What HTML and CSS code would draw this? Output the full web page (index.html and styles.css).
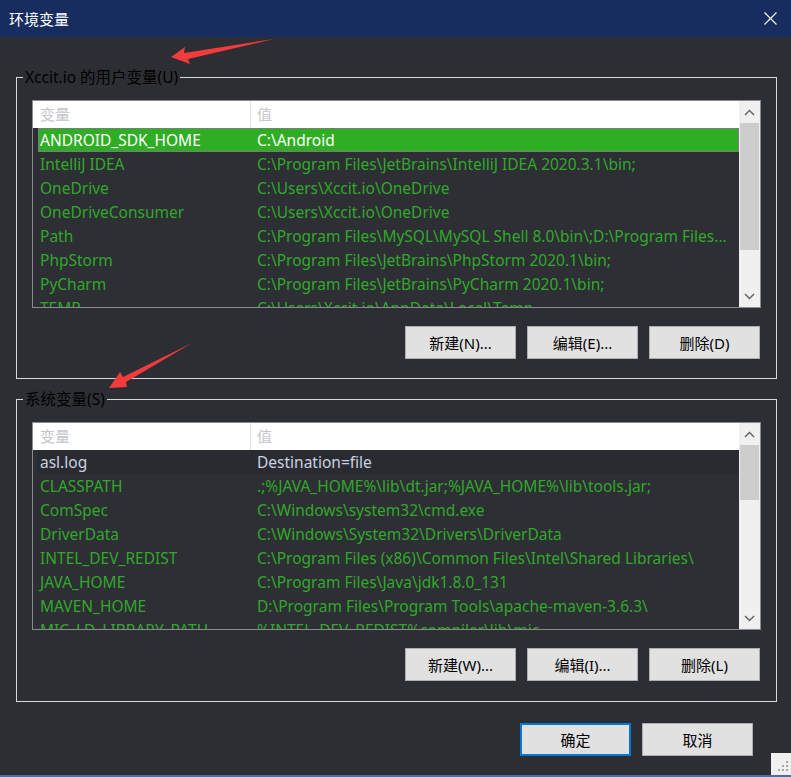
FILE: index.html
```html
<!DOCTYPE html>
<html lang="zh-CN">
<head>
<meta charset="utf-8">
<title>环境变量</title>
<link rel="stylesheet" href="styles.css">
</head>
<body>
<div class="window">
  <div class="titlebar">
    <span class="title">环境变量</span>
    <svg class="close" width="13" height="13" viewBox="0 0 13 13"><path d="M0.5 0.5 L12.5 12.5 M12.5 0.5 L0.5 12.5" stroke="#fff" stroke-width="1.1" fill="none"/></svg>
  </div>
  <div class="body">
    <fieldset class="group g1">
      <legend>Xccit.io 的用户变量(U)</legend>
      <div class="list">
        <div class="list-main">
          <div class="head"><div class="c1">变量</div><div class="c2">值</div></div>
          <div class="rows">
            <div class="row sel"><div class="c1">ANDROID_SDK_HOME</div><div class="c2">C:\Android</div></div>
            <div class="row"><div class="c1">IntelliJ IDEA</div><div class="c2">C:\Program Files\JetBrains\IntelliJ IDEA 2020.3.1\bin;</div></div>
            <div class="row"><div class="c1">OneDrive</div><div class="c2">C:\Users\Xccit.io\OneDrive</div></div>
            <div class="row"><div class="c1">OneDriveConsumer</div><div class="c2">C:\Users\Xccit.io\OneDrive</div></div>
            <div class="row"><div class="c1">Path</div><div class="c2">C:\Program Files\MySQL\MySQL Shell 8.0\bin\;D:\Program Files...</div></div>
            <div class="row"><div class="c1">PhpStorm</div><div class="c2">C:\Program Files\JetBrains\PhpStorm 2020.1\bin;</div></div>
            <div class="row"><div class="c1">PyCharm</div><div class="c2">C:\Program Files\JetBrains\PyCharm 2020.1\bin;</div></div>
            <div class="row"><div class="c1">TEMP</div><div class="c2">C:\Users\Xccit.io\AppData\Local\Temp</div></div>
          </div>
        </div>
        <div class="scroll">
          <div class="sbtn"><svg width="11" height="7" viewBox="0 0 11 7"><path d="M1 6 L5.5 1.5 L10 6" stroke="#606060" stroke-width="1.4" fill="none"/></svg></div>
          <div class="track"><div class="thumb t1"></div></div>
          <div class="sbtn"><svg width="11" height="7" viewBox="0 0 11 7"><path d="M1 1 L5.5 5.5 L10 1" stroke="#606060" stroke-width="1.4" fill="none"/></svg></div>
        </div>
      </div>
      <div class="btns">
        <button class="btn">新建(N)...</button>
        <button class="btn">编辑(E)...</button>
        <button class="btn">删除(D)</button>
      </div>
    </fieldset>

    <fieldset class="group g2">
      <legend>系统变量(S)</legend>
      <div class="list">
        <div class="list-main">
          <div class="head"><div class="c1">变量</div><div class="c2">值</div></div>
          <div class="rows">
            <div class="row cur"><div class="c1">asl.log</div><div class="c2">Destination=file</div></div>
            <div class="row"><div class="c1">CLASSPATH</div><div class="c2">.;%JAVA_HOME%\lib\dt.jar;%JAVA_HOME%\lib\tools.jar;</div></div>
            <div class="row"><div class="c1">ComSpec</div><div class="c2">C:\Windows\system32\cmd.exe</div></div>
            <div class="row"><div class="c1">DriverData</div><div class="c2">C:\Windows\System32\Drivers\DriverData</div></div>
            <div class="row"><div class="c1">INTEL_DEV_REDIST</div><div class="c2">C:\Program Files (x86)\Common Files\Intel\Shared Libraries\</div></div>
            <div class="row"><div class="c1">JAVA_HOME</div><div class="c2">C:\Program Files\Java\jdk1.8.0_131</div></div>
            <div class="row"><div class="c1">MAVEN_HOME</div><div class="c2">D:\Program Files\Program Tools\apache-maven-3.6.3\</div></div>
            <div class="row"><div class="c1">MIC_LD_LIBRARY_PATH</div><div class="c2">%INTEL_DEV_REDIST%compiler\lib\mic</div></div>
          </div>
        </div>
        <div class="scroll">
          <div class="sbtn"><svg width="11" height="7" viewBox="0 0 11 7"><path d="M1 6 L5.5 1.5 L10 6" stroke="#606060" stroke-width="1.4" fill="none"/></svg></div>
          <div class="track"><div class="thumb t2"></div></div>
          <div class="sbtn"><svg width="11" height="7" viewBox="0 0 11 7"><path d="M1 1 L5.5 5.5 L10 1" stroke="#606060" stroke-width="1.4" fill="none"/></svg></div>
        </div>
      </div>
      <div class="btns">
        <button class="btn">新建(W)...</button>
        <button class="btn">编辑(I)...</button>
        <button class="btn">删除(L)</button>
      </div>
    </fieldset>

    <div class="footer">
      <button class="btn primary">确定</button>
      <button class="btn">取消</button>
    </div>
  </div>

  <svg class="arrows" width="791" height="777" viewBox="0 0 791 777">
    <polygon points="171,57 185,47 184,53 274,39 188,59 190,64" fill="#f23b3b"/>
    <polygon points="109,388 120,372 123,377 192,343 126,382 127,387" fill="#f23b3b"/>
  </svg>

  <div class="grip">
    <svg width="20" height="22" viewBox="0 0 20 22">
      <rect x="15" y="8" width="2" height="2" fill="#a8a8a8"/>
      <rect x="11" y="12" width="2" height="2" fill="#a8a8a8"/>
      <rect x="15" y="12" width="2" height="2" fill="#a8a8a8"/>
      <rect x="7" y="16" width="2" height="2" fill="#a8a8a8"/>
      <rect x="11" y="16" width="2" height="2" fill="#a8a8a8"/>
      <rect x="15" y="16" width="2" height="2" fill="#a8a8a8"/>
    </svg>
  </div>
</div>
</body>
</html>
```

FILE: styles.css
```css
* { box-sizing: border-box; }

body {
  margin: 0;
  background: #2d2e33;
  font-family: "Noto Sans", "Noto Sans CJK SC", sans-serif;
}

.window {
  position: relative;
  width: 791px;
  height: 777px;
  overflow: hidden;
  background: #2d2e33;
  border-bottom: 2px solid #56689a;
}

.titlebar {
  height: 37px;
  background: #182d5f;
  color: #fff;
  display: flex;
  align-items: center;
  justify-content: space-between;
  padding: 0 14px 0 9px;
  font-size: 15px;
}

.title { line-height: 20px; }

.close { display: block; }

.body {
  padding: 30px 14px 0 16px;
}

.group {
  margin: 0;
  border: 1px solid #d8d8d8;
  padding: 0 15px 19px 15px;
  min-width: 0;
}

.g2 {
  margin-top: 10px;
  padding-bottom: 20px;
}

.group legend {
  margin-left: -9px;
  padding: 0 2px;
  font-size: 15.5px;
  line-height: 20px;
  color: #000;
}

.list {
  margin-top: 13px;
  height: 208px;
  border: 1px solid #8a8b90;
  background: #2e2f34;
  display: flex;
  overflow: hidden;
}

.list-main {
  flex: 1;
  min-width: 0;
  overflow: hidden;
}

.head {
  height: 27px;
  background: #fff;
  display: flex;
  font-size: 15px;
  line-height: 26px;
  color: #c4c6cc;
}

.head .c1 {
  width: 218px;
  padding-left: 7px;
  border-right: 1px solid #e3e3e3;
}

.head .c2 {
  padding-left: 6px;
}

.rows {
  margin-left: 5px;
}

.row {
  display: flex;
  height: 24px;
  font-size: 15.5px;
  line-height: 24px;
  color: #30a82a;
  white-space: nowrap;
}

.row .c1 {
  width: 213px;
  flex: none;
  padding-left: 2px;
  overflow: hidden;
}

.row .c2 {
  flex: 1;
  min-width: 0;
  padding-left: 6px;
  overflow: hidden;
}

.row.sel {
  background: #2fae24;
  color: #fff;
  outline: 1px dotted #c050d0;
  outline-offset: -1px;
}

.row.cur {
  background: #2a2b30;
  color: #c9d1e2;
}

.scroll {
  width: 21px;
  flex: none;
  background: #f0f0f0;
  display: flex;
  flex-direction: column;
}

.sbtn {
  height: 22px;
  display: flex;
  align-items: center;
  justify-content: center;
}

.track {
  flex: 1;
  padding: 0 1px;
}

.thumb {
  background: #cdcdcd;
}

.t1 { height: 127px; }
.t2 { height: 55px; }

.btns {
  display: flex;
  justify-content: flex-end;
  gap: 11px;
  margin-top: 18px;
  padding-right: 1px;
}

.btn {
  width: 111px;
  height: 33px;
  background: #e1e1e1;
  border: 1px solid #adadad;
  font-family: "Noto Sans", "Noto Sans CJK SC", sans-serif;
  font-size: 15px;
  color: #000;
  padding: 0;
}

.btn.primary {
  border: 2px solid #0078d7;
}

.footer {
  display: flex;
  justify-content: flex-end;
  gap: 11px;
  margin-top: 21px;
  padding-right: 24px;
}

.arrows {
  position: absolute;
  left: 0;
  top: 0;
  pointer-events: none;
}

.grip {
  position: absolute;
  right: 0;
  bottom: 0;
  width: 20px;
  height: 22px;
  background: #f0f0f0;
}

.grip svg { display: block; }
```
